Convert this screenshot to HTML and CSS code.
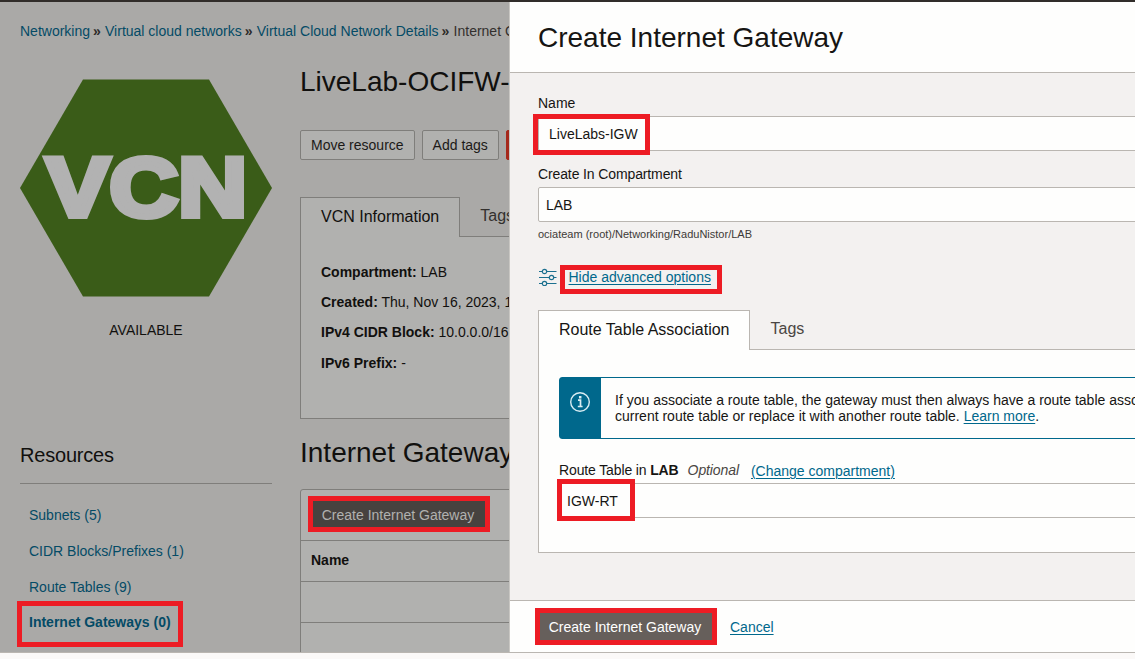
FILE: index.html
```html
<!DOCTYPE html>
<html lang="en">
<head>
<meta charset="utf-8">
<title>Create Internet Gateway</title>
<link rel="stylesheet" href="styles.css">
</head>
<body>
<div class="app">
  <div class="topbar"></div>
  <main class="stage">
    <div class="page">
      <nav class="crumbs"><a>Networking</a><i>»</i><a>Virtual cloud networks</a><i>»</i><a>Virtual Cloud Network Details</a><i>»</i><span>Internet G</span></nav>
      <div class="columns">
        <aside class="side">
          <svg class="badge" width="252" height="218" viewBox="0 0 252 218">
            <path d="M63 .5H189L252 109 189 217.500H63L0 109Z" fill="#3a5c18"/>
            <text x="26" y="137" textLength="201" lengthAdjust="spacingAndGlyphs">VCN</text>
          </svg>
          <div class="status">AVAILABLE</div>
          <h3 class="side-title">Resources</h3>
          <ul class="links">
            <li>Subnets (5)</li>
            <li>CIDR Blocks/Prefixes (1)</li>
            <li>Route Tables (9)</li>
            <li class="current">Internet Gateways (0)</li>
          </ul>
        </aside>
        <section class="detail">
          <h1 class="title">LiveLab-OCIFW-</h1>
          <div class="actions">
            <button class="btn">Move resource</button>
            <button class="btn">Add tags</button>
            <button class="btn danger" aria-label="Terminate"></button>
          </div>
          <div class="tabs">
            <div class="tab active">VCN Information</div>
            <div class="tab">Tags</div>
          </div>
          <div class="info">
            <p><b>Compartment:</b> LAB</p>
            <p><b>Created:</b> Thu, Nov 16, 2023, 1</p>
            <p><b>IPv4 CIDR Block:</b> 10.0.0.0/16</p>
            <p><b>IPv6 Prefix:</b> -</p>
          </div>
          <h2 class="title second">Internet Gateway</h2>
          <div class="table">
            <div class="toolbar"><button class="primary dim">Create Internet Gateway</button></div>
            <div class="row head">Name</div>
            <div class="row"></div>
            <div class="row last"></div>
          </div>
        </section>
      </div>
    </div>
    <div class="panel">
      <header class="panel-head">Create Internet Gateway</header>
      <div class="panel-body">
        <label class="label">Name</label>
        <div class="field name">LiveLabs-IGW</div>
        <label class="label tight">Create In Compartment</label>
        <div class="field">LAB</div>
        <div class="path">ociateam (root)/Networking/RaduNistor/LAB</div>
        <div class="advanced">
          <svg width="18" height="18" viewBox="0 0 18 18" fill="none" stroke="#1c708f" stroke-width="1.200">
            <path d="M0 3.500H3M8 3.500H17.500M0 9.500H10M15 9.500H17.500M0 15.500H3M8 15.500H17.500"/>
            <circle cx="5.500" cy="3.500" r="2.200"/><circle cx="12.500" cy="9.500" r="2.200"/><circle cx="5.500" cy="15.500" r="2.200"/>
          </svg>
          <a class="link">Hide advanced options</a>
        </div>
        <div class="tabs light">
          <div class="tab active">Route Table Association</div>
          <div class="tab">Tags</div>
        </div>
        <div class="card">
          <div class="notice">
            <div class="notice-icon">
              <svg width="22" height="22" viewBox="0 0 22 22" fill="none" stroke="#d9edf3">
                <circle cx="11" cy="11" r="9.300" stroke-width="1.400"/>
                <path d="M9 9.200H11.500V15.500M8.800 15.500H13.600" stroke-width="1.700"/>
                <path d="M11.200 5V7.500" stroke-width="2.500"/>
              </svg>
            </div>
            <div class="notice-text">If you associate a route table, the gateway must then always have a route table asso<br>current route table or replace it with another route table. <a class="link">Learn more</a>.</div>
          </div>
          <div class="rt-label"><span>Route Table in <b>LAB</b></span><em>Optional</em><a class="link">(Change compartment)</a></div>
          <div class="field">IGW-RT</div>
        </div>
      </div>
      <footer class="panel-foot"><button class="primary">Create Internet Gateway</button><a class="link">Cancel</a></footer>
    </div>
  </main>
  <div class="bottombar"></div>
  <div class="mark mark-side"></div>
  <div class="mark mark-table"></div>
  <div class="mark mark-name"></div>
  <div class="mark mark-advanced"></div>
  <div class="mark mark-route"></div>
  <div class="mark mark-submit"></div>
</div>
</body>
</html>
```
FILE: styles.css
```css
* { box-sizing: border-box; }
body { margin: 0; font: 14px/20px "Liberation Sans", Arial, sans-serif; color: #161513; }
h1, h2, h3, p, ul { margin: 0; padding: 0; font-weight: normal; }
button { font: inherit; padding: 0; margin: 0; }

.app { position: relative; width: 1135px; height: 659px; overflow: hidden; display: flex; flex-direction: column; white-space: nowrap; }
.topbar { height: 2px; background: #312d2a; }
.stage { height: 650px; display: flex; }
.bottombar { height: 7px; border-top: 1px solid #bab6b1; background: #fbf9f8; }

/* Dimmed page behind the panel */
.page { width: 509px; flex: none; overflow: hidden; background: #aaa9a7; color: #11100e; padding: 19px 0 0 20px; }
.crumbs { height: 20px; display: flex; color: #33302e; }
.crumbs > * { flex: none; }
.crumbs a { color: #044b66; }
.crumbs i { font-style: normal; font-weight: bold; width: 15px; padding-left: 3px; color: #2d2b29; }
.columns { display: flex; gap: 28px; }

.side { width: 252px; flex: none; padding-top: 38px; }
.badge { display: block; }
.badge text { font-size: 83px; font-weight: bold; fill: #b2b2b2; stroke: #b2b2b2; stroke-width: 6px; }
.status { text-align: center; margin-top: 23px; }
.side-title { font-size: 20px; line-height: 24px; letter-spacing: -.2px; margin-top: 103px; height: 41px; border-bottom: 1px solid #7f7e7b; }
.links { list-style: none; padding: 21px 0 0 9px; color: #044b66; }
.links li { height: 36px; line-height: 20px; }
.links .current { font-weight: bold; margin-top: -1px; }

.detail { width: 600px; flex: none; padding-top: 25px; }
.title { font-size: 28px; line-height: 32px; }
.actions { display: flex; gap: 7px; margin-top: 32px; }
.btn { height: 30px; padding: 0 10px; border: 1px solid #7f7e7b; border-radius: 2px; background: #b1b1af; color: #1c1a18; }
.btn.danger { width: 86px; background: #a5281b; border-color: #a5281b; }

.tabs { display: flex; margin-top: 37px; height: 40px; font-size: 16px; }
.tab { padding: 9px 20px 0; border-bottom: 1px solid #7f7e7b; color: #33302e; flex: 1; }
.tab.active { flex: none; border: 1px solid #7f7e7b; border-bottom: 0; background: #b1b1af; color: #11100e; }
.info { height: 182px; padding: 25px 20px 0; border: solid #7f7e7b; border-width: 0 0 1px 1px; background: #b1b1af; }
.info p { height: 30px; }
.info p:last-child { padding-top: 1px; }
.second { margin-top: 18px; }
.table { margin-top: 20px; border: 1px solid #7f7e7b; border-radius: 3px; background: #b1b1af; }
.toolbar { height: 51px; padding: 11px; border-bottom: 1px solid #7f7e7b; }
.row { height: 41px; padding: 9px 10px; border-bottom: 1px solid #7f7e7b; font-weight: bold; }
.row.last { border: 0; }

.primary { display: block; width: 174px; height: 28px; padding-right: 2px; border: 0; background: #665f5b; color: #fff; }
.primary.dim { height: 27px; background: #47423f; color: #b1b1af; }

/* Slide-in panel */
.panel { width: 626px; flex: none; overflow: hidden; border-left: 1px solid #c9c7c3; background: #f3f1f0; display: flex; flex-direction: column; }
.panel-head { height: 71px; flex: none; padding: 18px 28px; font-size: 28px; line-height: 36px; background: #fefefd; border-bottom: 1px solid #bab6b1; }
.panel-body { flex: 1; width: 720px; padding: 20px 28px 0; }
.label { display: block; height: 23px; }
.label.tight { letter-spacing: -.12px; }
.field { height: 35px; margin-bottom: 13px; padding: 7px; border: 1px solid #bab6b1; border-radius: 2px; background: #fefefd; }
.field.name { padding-left: 10px; }
.path { font-size: 11px; line-height: 14px; margin-top: -8px; color: #3d3a37; }
.link { color: #00688c; text-decoration: underline; text-decoration-thickness: 1px; text-underline-offset: 2px; }
.advanced { display: flex; gap: 12px; height: 20px; margin-top: 26px; }
.advanced svg { margin: 1px 0 0 1px; }
.advanced .link { margin-left: -.5px; }
.tabs.light { margin-top: 23px; }
.light .tab { border-color: #bab6b1; color: #4a4643; }
.light .tab.active { background: #fefefd; color: #161513; }
.card { height: 203px; padding: 27px 0 0 20px; border: solid #bab6b1; border-width: 0 0 1px 1px; background: #fefefd; }
.notice { display: flex; height: 62px; border: 1px solid #00688c; border-radius: 3px; line-height: 16px; }
.notice-icon { width: 41px; background: #00688c; padding: 13px 0 0 9px; }
.notice-text { padding: 14px 0 0 14px; }
.rt-label { display: flex; margin-top: 21px; height: 23px; }
.rt-label span { letter-spacing: -.13px; }
.rt-label em { margin-left: 9px; letter-spacing: -.1px; color: #4a4643; }
.rt-label .link { margin: 1px 0 0 12px; }
.panel-foot { height: 52px; flex: none; display: flex; gap: 17px; padding: 12px 29px; line-height: 28px; background: #fefefd; border-top: 1px solid #bab6b1; }

/* Callout rectangles laid over the interface */
.mark { position: absolute; border: 5px solid #ed1c24; }
.mark-side { left: 17px; top: 601px; width: 166px; height: 46px; }
.mark-table { left: 308px; top: 496px; width: 182px; height: 36px; }
.mark-name { left: 533px; top: 114px; width: 117px; height: 41px; }
.mark-advanced { left: 560px; top: 265px; width: 162px; height: 29px; }
.mark-route { left: 557px; top: 479px; width: 78px; height: 42px; }
.mark-submit { left: 535px; top: 608px; width: 182px; height: 37px; }
```
